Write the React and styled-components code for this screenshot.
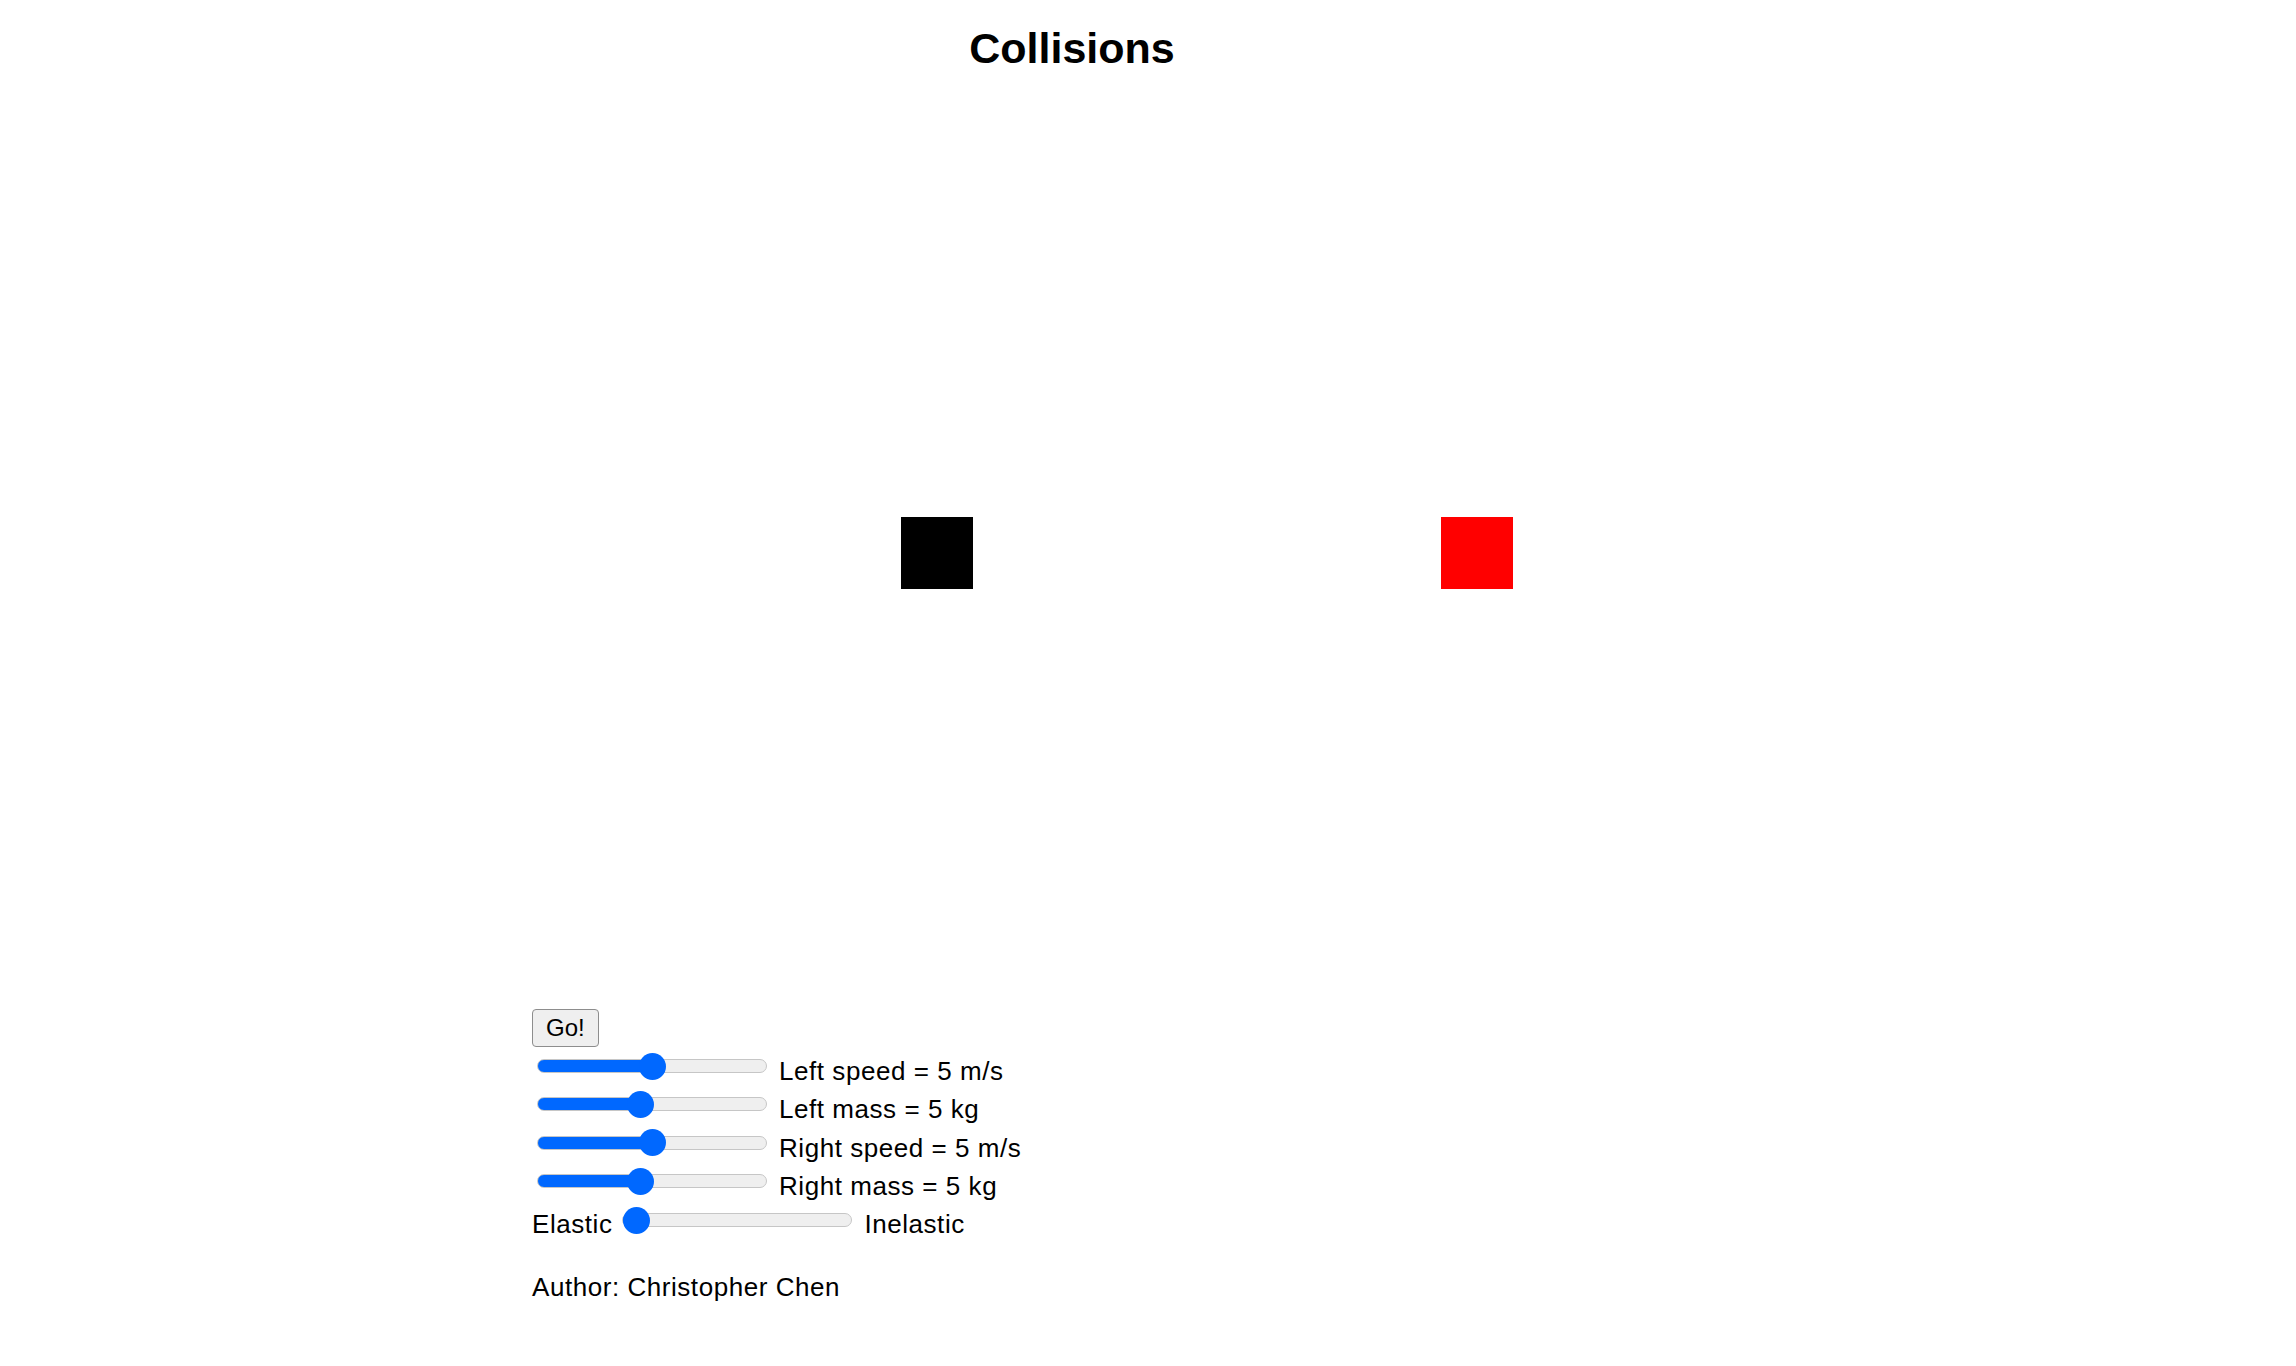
import React, { useState } from 'react';
import styled, { createGlobalStyle } from 'styled-components';

const GlobalStyle = createGlobalStyle`
  html, body {
    margin: 0;
    padding: 0;
    background: #ffffff;
  }

  body {
    font-family: "Liberation Sans", Arial, sans-serif;
    color: #000000;
  }
`;

const BLUE = '#0068ff';

const Page = styled.div`
  padding-left: 532px;
  padding-bottom: 40px;
`;

const Stage = styled.div`
  width: 1080px;
`;

const Title = styled.h2`
  margin: 0;
  padding-top: 24px;
  font-size: 43px;
  line-height: 48px;
  font-weight: bold;
  text-align: center;
`;

const Canvas = styled.div`
  position: relative;
  height: 937px;
`;

const Block = styled.div`
  position: absolute;
  left: ${(p) => p.$x}px;
  top: ${(p) => p.$y}px;
  width: 72px;
  height: 72px;
  background: ${(p) => p.$color};
`;

const Controls = styled.div`
  display: flex;
  flex-direction: column;
  align-items: flex-start;
`;

const GoButton = styled.button`
  box-sizing: border-box;
  height: 38px;
  padding: 0 13px;
  border: 1px solid #8d8d8d;
  border-radius: 4px;
  background: #efefef;
  font-family: "Liberation Sans", Arial, sans-serif;
  font-size: 24px;
  line-height: 1;
  color: #000000;
  cursor: pointer;
`;

const Row = styled.div`
  display: flex;
  align-items: center;
  height: ${(p) => p.$h}px;
`;

const Label = styled.span`
  font-size: 26px;
  line-height: 1;
  letter-spacing: 0.55px;
  padding-top: ${(p) => p.$drop}px;
  white-space: nowrap;
`;

const Slider = styled.input.attrs({ type: 'range' })`
  -webkit-appearance: none;
  appearance: none;
  width: 230px;
  height: 28px;
  margin: 0 12px 0 ${(p) => p.$lead}px;
  padding: 0;
  background: transparent;
  cursor: pointer;

  &:focus {
    outline: none;
  }

  &::-webkit-slider-runnable-track {
    box-sizing: border-box;
    height: 14px;
    border-radius: 7px;
    border: 1px solid #c6c6c6;
    background: linear-gradient(
      to right,
      ${BLUE} 0,
      ${BLUE} ${(p) => p.$fill},
      #efefef ${(p) => p.$fill},
      #efefef 100%
    );
  }

  &::-webkit-slider-thumb {
    -webkit-appearance: none;
    appearance: none;
    width: 27px;
    height: 27px;
    margin-top: -7.5px;
    border: none;
    border-radius: 50%;
    background: ${BLUE};
  }
`;

const Author = styled.p`
  margin: 32px 0 0;
  font-size: 26px;
  line-height: 30px;
  letter-spacing: 0.55px;
`;

// fill runs to the thumb centre: thumb 27px on a 228px track
const fillFor = (value, min, max) => {
  const frac = (value - min) / (max - min);
  return `calc(13.5px + ${frac} * 201px)`;
};

const ParamRow = ({ label, value, min, max, onChange }) => (
  <Row $h={38.3}>
    <Slider
      $lead={5}
      min={min}
      max={max}
      step={1}
      value={value}
      $fill={fillFor(value, min, max)}
      onChange={(e) => onChange(Number(e.target.value))}
    />
    <Label $drop={10}>{label}</Label>
  </Row>
);

const App = () => {
  const [leftSpeed, setLeftSpeed] = useState(5);
  const [leftMass, setLeftMass] = useState(5);
  const [rightSpeed, setRightSpeed] = useState(5);
  const [rightMass, setRightMass] = useState(5);
  const [elasticity, setElasticity] = useState(0);

  return (
    <Page>
      <GlobalStyle />
      <Stage>
        <Title>Collisions</Title>
        <Canvas>
          <Block $x={369} $y={445} $color="#000000" />
          <Block $x={909} $y={445} $color="#ff0000" />
        </Canvas>
      </Stage>
      <Controls>
        <GoButton type="button">Go!</GoButton>
        <ParamRow
          label={`Left speed = ${leftSpeed} m/s`}
          value={leftSpeed}
          min={0}
          max={10}
          onChange={setLeftSpeed}
        />
        <ParamRow
          label={`Left mass = ${leftMass} kg`}
          value={leftMass}
          min={1}
          max={10}
          onChange={setLeftMass}
        />
        <ParamRow
          label={`Right speed = ${rightSpeed} m/s`}
          value={rightSpeed}
          min={0}
          max={10}
          onChange={setRightSpeed}
        />
        <ParamRow
          label={`Right mass = ${rightMass} kg`}
          value={rightMass}
          min={1}
          max={10}
          onChange={setRightMass}
        />
        <Row $h={40}>
          <Label $drop={7}>Elastic</Label>
          <Slider
            $lead={10}
            min={0}
            max={100}
            step={1}
            value={elasticity}
            $fill={fillFor(elasticity, 0, 100)}
            onChange={(e) => setElasticity(Number(e.target.value))}
          />
          <Label $drop={7}>Inelastic</Label>
        </Row>
        <Author>Author: Christopher Chen</Author>
      </Controls>
    </Page>
  );
};

export default App;
